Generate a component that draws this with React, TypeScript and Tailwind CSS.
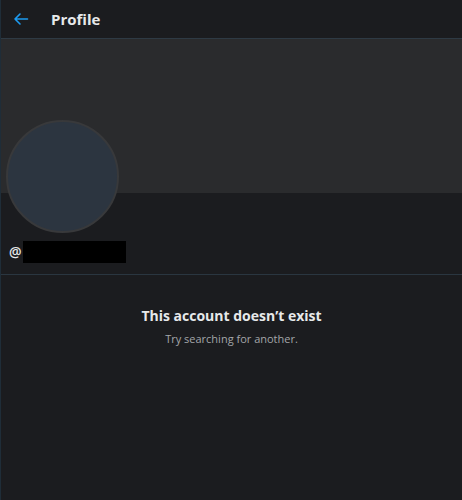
export default function App() {
  return (
    <div
      className="w-full h-[500px] bg-[#1b1c1f] border-l border-[#1f2d38] text-[#e7e9ea] overflow-hidden"
      style={{ fontFamily: '"Open Sans", "Noto Sans", sans-serif' }}
    >
      {/* top bar */}
      <div className="h-[39px] flex items-center border-b border-[#2e3a44]">
        <svg className="ml-[12px] w-[16px] h-[16px]" viewBox="0 0 16 16" fill="none" stroke="#1d9bf0" strokeWidth="1.6" strokeLinecap="round" strokeLinejoin="round">
          <path d="M14.5 8H2M7 3L2 8l5 5" />
        </svg>
        <span className="ml-[22px] text-[15px] font-bold leading-none">Profile</span>
      </div>

      {/* banner */}
      <div className="h-[154px] bg-[#2a2b2d]" />

      {/* avatar + handle */}
      <div className="px-[5px] pb-[11px] border-b border-[#2a3640]">
        <div className="-mt-[73px] w-[113px] h-[113px] rounded-full bg-[#2c3540] border-2 border-[#38393b]" />
        <div className="mt-[8px] flex items-center h-[22px]">
          <span className="ml-[3px] text-[14px] font-semibold text-[#e7e9ea] leading-none">@</span>
          <div className="ml-[1px] w-[103px] h-[22px] bg-black" />
        </div>
      </div>

      {/* empty state */}
      <div className="pt-[31px] flex flex-col items-center">
        <h2 className="text-[14px] font-bold leading-[20px] text-[#e7e9ea]">This account doesn’t exist</h2>
        <p className="mt-[6px] text-[11px] leading-[14px] text-[#a3a6a9]">Try searching for another.</p>
      </div>
    </div>
  );
}
